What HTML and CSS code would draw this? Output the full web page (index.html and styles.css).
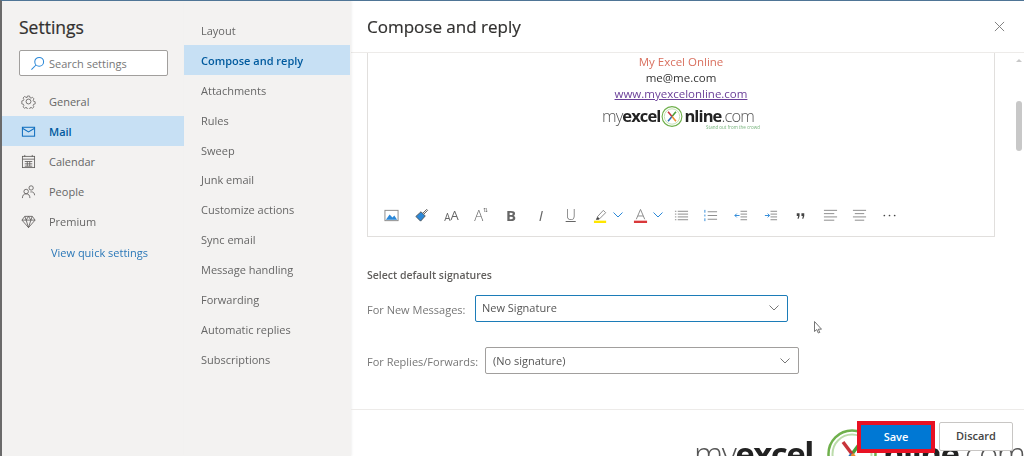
FILE: index.html
```html
<!DOCTYPE html>
<html lang="en">
<head>
<meta charset="utf-8">
<title>Settings</title>
<link rel="stylesheet" href="styles.css">
</head>
<body>
<div class="app">
  <nav class="nav">
    <h1 class="nav-title">Settings</h1>
    <div class="search">
      <svg class="search-icon" viewBox="0 0 16 16"><circle cx="9.8" cy="6.2" r="4.7"/><path d="M6.4 9.6 1.5 14.5"/></svg>
      <span>Search settings</span>
    </div>
    <ul class="nav-list">
      <li class="nav-item">
        <svg class="nav-icon" viewBox="0 0 16 16"><path d="M6.7 1.5h2.6l.4 1.9 1.3.6 1.7-1 1.8 1.9-1 1.6.5 1.3 1.9.5v2.6l-1.9.4-.5 1.3 1 1.7-1.8 1.7-1.7-1-1.3.6-.4 1.8H6.7l-.4-1.8-1.3-.6-1.7 1-1.8-1.7 1-1.7-.5-1.3-1.9-.4V7.3l1.9-.5.5-1.3-1-1.6 1.8-1.9 1.7 1L6.3 3.4z" transform="translate(.8 .8) scale(.9)"/><circle cx="8" cy="8" r="2.6"/></svg>
        General
      </li>
      <li class="nav-item is-active">
        <svg class="nav-icon" viewBox="0 0 16 16"><rect x="1.5" y="3.5" width="13" height="9.500"/><path d="m1.500 4.500 6.500 4 6.500-4"/></svg>
        Mail
      </li>
      <li class="nav-item">
        <svg class="nav-icon" viewBox="0 0 16 16"><rect x="1.500" y="2.500" width="13" height="12"/><path d="M1.500 5.500h13M4 1v2M12 1v2M4 8h8M4 10.500h8M4 13h8M6.700 8v5M9.300 8v5"/></svg>
        Calendar
      </li>
      <li class="nav-item">
        <svg class="nav-icon" viewBox="0 0 16 16"><circle cx="5.500" cy="8" r="2.400"/><path d="M1.500 15c0-3 1.500-4.500 4-4.500s4 1.500 4 4.500"/><circle cx="10.800" cy="4.200" r="2.300"/><path d="M10 8.500c.3-.1.600-.1 1-.1 2.200 0 3.500 1.300 3.500 3.600"/></svg>
        People
      </li>
      <li class="nav-item">
        <svg class="nav-icon" viewBox="0 0 16 16"><path d="M4 2.500h8l3 4-7 8-7-8zM1 6.500h14M5.500 6.500 8 14.500l2.500-8M4 2.500l1.500 4L8 2.500l2.500 4 1.500-4"/></svg>
        Premium
      </li>
    </ul>
    <a class="quick-link">View quick settings</a>
  </nav>

  <aside class="sub">
    <ul class="sub-list">
      <li class="sub-item">Layout</li>
      <li class="sub-item is-active">Compose and reply</li>
      <li class="sub-item">Attachments</li>
      <li class="sub-item">Rules</li>
      <li class="sub-item">Sweep</li>
      <li class="sub-item">Junk email</li>
      <li class="sub-item">Customize actions</li>
      <li class="sub-item">Sync email</li>
      <li class="sub-item">Message handling</li>
      <li class="sub-item">Forwarding</li>
      <li class="sub-item">Automatic replies</li>
      <li class="sub-item">Subscriptions</li>
    </ul>
  </aside>

  <main class="main">
    <header class="main-head">
      <h2 class="main-title">Compose and reply</h2>
      <svg class="close" viewBox="0 0 12 12"><path d="M1 1l10 10M11 1 1 11"/></svg>
    </header>

    <div class="scroll">
      <div class="content">
        <section class="editor">
          <div class="sig">
            <div class="sig-name">My Excel Online</div>
            <div class="sig-line">me@me.com</div>
            <a class="sig-link">www.myexcelonline.com</a>
            <div class="logo logo-small">
              <span class="logo-thin">my</span><span class="logo-bold">excel</span>
              <svg class="logo-ring" viewBox="0 0 50 50"><circle cx="25" cy="25" r="22.500" class="ring-a"/><circle cx="25" cy="25" r="17.500" class="ring-b"/><path class="x-g" d="M25 25 34 14"/><path class="x-r" d="M25 25 16 14"/><path class="x-b" d="M25 25 16 36"/><path class="x-o" d="M25 25 34 36"/></svg>
              <span class="logo-bold">nline</span><span class="logo-thin">.com</span>
              <span class="logo-tag">Stand out from the crowd</span>
            </div>
          </div>
          <div class="toolbar">
            <span class="tool"><svg viewBox="0 0 16 16"><rect x="1" y="2.500" width="14" height="11" class="s-gray"/><path class="f-blue" d="M2 12.500 6 7l3 3 2-2 3 4.500z"/></svg></span>
            <span class="tool"><svg viewBox="0 0 16 16"><path class="s-dark" d="M9.500 5.500 13.500 1.500l1 1-4 4"/><path class="f-blue s-dark" d="M7.500 4 12 8.500 7 14 2 9z"/></svg></span>
            <span class="tool tool-text tool-aa"><small>A</small>A</span>
            <span class="tool tool-text tool-thin">A<sup class="tool-sup">&#8645;</sup></span>
            <span class="tool tool-text tool-bold">B</span>
            <span class="tool tool-text tool-italic">I</span>
            <span class="tool tool-text tool-under">U</span>
            <span class="tool"><svg viewBox="0 0 16 16"><path class="s-gray" d="M4.500 9.500 11 2.500l2.500 2.500L7 11.500z"/><path class="f-dark" d="M4.500 9.500 7 11.500l-1 1H3z"/><rect class="f-yellow" x="1" y="13.500" width="13" height="2.500"/></svg></span>
            <span class="caret"><svg viewBox="0 0 10 6"><path d="M.5.500 5 5 9.500.500"/></svg></span>
            <span class="tool tool-color"><svg viewBox="0 0 16 16"><path class="s-gray" d="M3.500 12 8 1.500 12.500 12M5.200 8.500h5.600"/><rect class="f-red" x="1" y="13.500" width="14" height="2.500"/></svg></span>
            <span class="caret"><svg viewBox="0 0 10 6"><path d="M.5.500 5 5 9.500.500"/></svg></span>
            <span class="tool tool-list"><svg viewBox="0 0 16 16"><path class="s-gray" d="M4 3.500h11M4 6.500h11M4 9.500h11M4 12.500h11M1 3.500h1.500M1 6.500h1.500M1 9.500h1.500M1 12.500h1.500"/></svg></span>
            <span class="tool"><svg viewBox="0 0 16 16"><path class="s-gray" d="M5 4h10M5 8h10M5 12h10"/><path class="s-blue" d="M2 2v3M2 7v2M2 11v3"/></svg></span>
            <span class="tool"><svg viewBox="0 0 16 16"><path class="s-gray" d="M8 3.500h7M8 6.500h7M8 9.500h7M8 12.500h7"/><path class="s-blue" d="M7 8H2M4 6 2 8l2 2"/></svg></span>
            <span class="tool"><svg viewBox="0 0 16 16"><path class="s-gray" d="M8 3.500h7M8 6.500h7M8 9.500h7M8 12.500h7"/><path class="s-blue" d="M2 8h5M5 6l2 2-2 2"/></svg></span>
            <span class="tool"><svg viewBox="0 0 16 16"><path class="f-dark" d="M4 5.500h3v3l-1 3H4.800L5.500 8.500H4zM9 5.500h3v3l-1 3H9.800l.7-3H9z"/></svg></span>
            <span class="tool"><svg viewBox="0 0 16 16"><path class="s-gray" d="M1 2.500h14M1 6h11M1 9.500h14M1 13h11"/></svg></span>
            <span class="tool"><svg viewBox="0 0 16 16"><path class="s-gray" d="M1 2.500h14M3 6h10M1 9.500h14M3 13h10"/></svg></span>
            <span class="tool"><svg viewBox="0 0 16 16"><circle class="f-dark" cx="2.500" cy="8" r=".9"/><circle class="f-dark" cx="8" cy="8" r=".9"/><circle class="f-dark" cx="13.500" cy="8" r=".9"/></svg></span>
          </div>
        </section>

        <h3 class="sig-heading">Select default signatures</h3>
        <div class="field field-new">
          <label class="field-label">For New Messages:</label>
          <div class="select is-focus">
            <span>New Signature</span>
            <svg class="select-caret" viewBox="0 0 10 6"><path d="M.5.500 5 5 9.500.500"/></svg>
          </div>
        </div>
        <div class="field field-reply">
          <label class="field-label">For Replies/Forwards:</label>
          <div class="select">
            <span>(No signature)</span>
            <svg class="select-caret" viewBox="0 0 10 6"><path d="M.5.500 5 5 9.500.500"/></svg>
          </div>
        </div>
      </div>
      <div class="scrollbar">
        <span class="scroll-arrow"></span>
        <span class="scroll-thumb"></span>
      </div>
    </div>

    <footer class="foot">
      <button class="btn btn-save">Save</button>
      <button class="btn btn-discard">Discard</button>
    </footer>
  </main>

  <svg class="pointer" viewBox="0 0 8 13"><path d="M.5.500v10l2.300-2 1.500 3.500 1.500-.6L4.300 8.200H7.500z"/></svg>

  <div class="logo logo-mark">
    <span class="logo-thin">my</span><span class="logo-bold">excel</span>
    <svg class="logo-ring" viewBox="0 0 50 50"><circle cx="25" cy="25" r="23.500" class="ring-a"/><circle cx="25" cy="25" r="19.500" class="ring-b"/><path class="x-g" d="M25 25 34 13"/><path class="x-r" d="M25 25 16 13"/><path class="x-b" d="M25 25 16 37"/><path class="x-o" d="M25 25 34 37"/></svg>
    <span class="logo-bold">nline</span><span class="logo-thin">.com</span>
  </div>
</div>
</body>
</html>
```
FILE: styles.css
```css
* { box-sizing: border-box; }
html, body { margin: 0; padding: 0; height: 456px; overflow: hidden; }
body {
  background: #fff;
  font-family: "Open Sans", "Liberation Sans", sans-serif;
  font-size: 11px;
  color: #666;
}
ul { list-style: none; margin: 0; padding: 0; }
h1, h2, h3 { margin: 0; }

.app {
  position: relative;
  display: flex;
  height: 456px;
  overflow: hidden;
  border-top: 1px solid #4f7596;
  border-left: 2px solid #6a6a6a;
  filter: blur(.3px);
}

/* left nav */
.nav { width: 182px; background: #f3f2f1; padding: 14px 0 0; flex: none; }
.nav-title { font-size: 17.500px; font-weight: 400; color: #323130; line-height: 24px; margin-left: 17px; -webkit-text-stroke: .2px #323130; }
.search {
  display: flex; align-items: center;
  width: 149px; height: 26px;
  margin: 11px 0 0 17px;
  padding-left: 10px;
  background: #fff;
  border: 1px solid #a19f9d;
  border-radius: 2px;
  color: #777;
}
.search-icon { width: 15px; height: 15px; margin-right: 4px; fill: none; stroke: #2b88d8; stroke-width: 1.100; }
.nav-list { margin-top: 10px; }
.nav-item { display: flex; align-items: center; height: 30px; padding-left: 19px; }
.nav-icon { width: 15px; height: 15px; margin-right: 13px; fill: none; stroke: #605e5c; stroke-width: .9; }
.nav-item.is-active { background: #c7e0f4; color: #005a9e; font-weight: 600; }
.nav-item.is-active .nav-icon { stroke: #106ebe; stroke-width: 1.100; }
.quick-link { display: block; margin: 9px 0 0 49px; color: #2b78b8; line-height: 16px; }

/* middle list */
.sub { width: 167px; flex: none; background: #f3f2f1; padding-top: 14px; box-shadow: 1px 0 2px rgba(0,0,0,.06); position: relative; }
.sub-item { height: 29.880px; line-height: 31px; padding-left: 17px; }
.sub-item.is-active { background: #c7e0f4; color: #005a9e; font-weight: 600; margin-right: 1px; }

/* main */
.main { flex: 1; min-width: 0; display: flex; flex-direction: column; background: #fff; }
.main-head {
  height: 52px; flex: none;
  display: flex; align-items: center; justify-content: space-between;
  padding: 0 19px 1px 16px;
  border-bottom: 1px solid #edebe9;
}
.main-title { font-size: 17px; font-weight: 400; color: #323130; -webkit-text-stroke: .2px #323130; }
.close { width: 11px; height: 11px; fill: none; stroke: #777; stroke-width: 1; }

.scroll { flex: 1; min-height: 0; display: flex; }
.content { width: 644px; padding-left: 16px; flex: none; }
.editor { width: 628px; height: 184px; border: 1px solid #e1dfdd; border-top: 0; display: flex; flex-direction: column; }

.sig { height: 142px; padding-top: 1px; text-align: center; font-size: 11.500px; line-height: 16px; color: #333; }
.sig-name { color: #d9705f; }
.sig-line { color: #333; }
.sig-link { color: #6a3f98; text-decoration: underline; display: block; }

.logo { display: flex; white-space: nowrap; color: #3a3a3a; }
.logo-thin { font-weight: 300; color: #555; }
.logo-bold { font-weight: 700; color: #222; }
.logo-small { position: relative; align-items: flex-start; width: 158px; height: 24px; margin: 3px 0 0 234px; font-size: 16.500px; line-height: 22px; letter-spacing: -.9px; }
.logo-small .logo-ring { width: 22px; height: 23px; flex: none; margin: 0 1px; }
.logo-tag { position: absolute; right: 0; bottom: -1px; font-size: 4.500px; line-height: 5px; letter-spacing: 0; color: #75b27a; }
.logo-ring { fill: none; }
.ring-a { stroke: #6fb04c; stroke-width: 2.500; }
.ring-b { stroke: #bcdcab; stroke-width: 2; }
.x-g, .x-r, .x-b, .x-o { stroke-width: 3.500; }
.x-g { stroke: #4c9f38; }
.x-r { stroke: #c8333a; }
.x-b { stroke: #2c6fb5; }
.x-o { stroke: #ee8b2f; }

.toolbar { display: flex; align-items: center; height: 30px; padding-left: 9px; margin-top: 5px; }
.tool { flex: none; width: 29.800px; height: 20px; display: flex; align-items: center; justify-content: center; color: #666; }
.tool svg { width: 15px; height: 15px; fill: none; }
.caret { flex: none; width: 6px; display: flex; justify-content: center; }
.caret svg { flex: none; width: 10px; height: 6px; fill: none; stroke: #2b88d8; stroke-width: 1; }
.tool-color { margin-left: 4px; }
.tool-list { margin-left: 5px; }
.s-gray { stroke: #888; stroke-width: 1; fill: none; }
.s-dark { stroke: #555; stroke-width: 1; }
.s-blue { stroke: #2b88d8; stroke-width: 1; fill: none; }
.tool svg .f-dark { fill: #444; }
.tool svg .f-yellow { fill: #ffe600; }
.tool svg .f-red { fill: #d9383a; }
.tool svg .f-blue { fill: #2b88d8; }
.tool-text { font-size: 14px; line-height: 20px; }
.tool-aa { font-size: 13px; }
.tool-aa small { font-size: 10px; align-self: flex-start; margin-top: 2px; }
.tool-thin { font-weight: 300; font-size: 15px; }
.tool-sup { font-size: 6px; align-self: flex-start; line-height: 10px; }
.tool-bold { font-weight: 700; font-size: 15px; }
.tool-italic { font-style: italic; font-weight: 400; font-size: 15px; }
.tool-under { text-decoration: underline; font-weight: 300; font-size: 14px; }

.sig-heading { font-size: 10.500px; font-weight: 600; color: #605e5c; line-height: 14px; margin-top: 31px; }
.field { display: flex; align-items: center; }
.field-new { margin-top: 13px; }
.field-reply { margin-top: 25px; }
.field-label { flex: none; color: #777; padding-top: 1px; }
.field-new .field-label { width: 108px; }
.field-reply .field-label { width: 118px; }
.select {
  width: 314px; height: 27px;
  display: flex; align-items: center; justify-content: space-between;
  padding: 0 7px 0 7px;
  border: 1px solid #a19f9d;
  border-radius: 2px;
  color: #555;
  background: #fff;
}
.select.is-focus { width: 313px; border: 1.500px solid #1c7cb8; padding: 0 7px 2px 6px; }
.select-caret { width: 10px; height: 6px; fill: none; stroke: #777; stroke-width: 1; margin-right: 1px; }

.scrollbar { flex: 1; display: flex; flex-direction: column; padding: 6px 0 0 21px; }
.scroll-arrow { width: 0; height: 0; border: 3px solid transparent; border-top: 0; border-bottom: 3px solid #c8c8c8; }
.scroll-thumb { width: 6px; height: 50px; background: #c8c8c8; border-radius: 3px; margin-top: 39px; }

.foot {
  height: 47px; flex: none;
  display: flex; justify-content: flex-end;
  align-items: flex-start;
  padding: 12px 11px 0 0;
  border-top: 1px solid #edebe9;
  position: relative;
  z-index: 2;
}
.btn { font: inherit; border-radius: 2px; padding: 0 0 2px; font-weight: 600; }
.btn-save {
  width: 78px; height: 32px; margin-right: 4px;
  background: #0078d4;
  color: #fff;
  border: 4px solid #e81123;
  border-radius: 0;
  position: relative;
  top: -1px;
}
.btn-discard { width: 74px; height: 29px; background: #fff; color: #444; border: 1px solid #c8c6c4; }

.pointer { position: absolute; left: 812px; top: 320px; width: 8px; height: 13px; fill: #fff; stroke: #666; stroke-width: .9; }

.logo-mark {
  position: absolute; left: 692px; top: 428px;
  width: 330px; height: 27px;
  overflow: hidden;
  align-items: flex-start;
  font-size: 33px; line-height: 50px; letter-spacing: -1.500px;
  z-index: 1;
}
.logo-mark .logo-ring { width: 50px; height: 50px; flex: none; margin: 0 6px 0 14px; }
```
